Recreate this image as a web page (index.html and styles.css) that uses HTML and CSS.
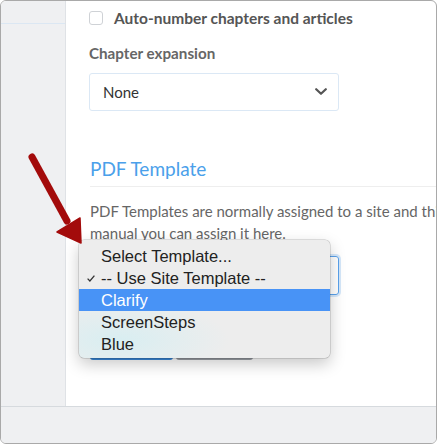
FILE: index.html
```html
<!DOCTYPE html>
<html>
<head>
<meta charset="utf-8">
<link rel="stylesheet" href="styles.css">
</head>
<body>
<div class="window">
  <div class="top">
    <aside class="sidebar"><div class="sidebar-line"></div></aside>
    <main class="main">
      <label class="check-row"><span class="checkbox"></span><span>Auto-number chapters and articles</span></label>
      <div class="field-label">Chapter expansion</div>
      <div class="select">
        <span>None</span>
        <svg class="chevron" width="12" height="8" viewBox="0 0 12 8"><polyline points="1.2,1.2 6,5.8 10.8,1.2" fill="none" stroke="#555" stroke-width="2.2" stroke-linecap="round" stroke-linejoin="round"/></svg>
      </div>
      <h2 class="section-title">PDF Template</h2>
      <p class="desc"><span class="line">PDF Templates are normally assigned to a site and this is the default template.</span><span class="line">manual you can assign it here.</span></p>
      <div class="select select-focus"></div>
      <div class="buttons">
        <span class="btn btn-primary"></span>
        <span class="btn btn-secondary"></span>
      </div>
    </main>
  </div>
  <footer class="footer"></footer>

  <div class="menu">
    <div class="menu-item">Select Template...</div>
    <div class="menu-item"><svg class="tick" width="8" height="7" viewBox="0 0 8 7"><polyline points="0.6,3.6 2.9,6 7.4,0.6" fill="none" stroke="#333" stroke-width="1.3"/></svg>-- Use Site Template --</div>
    <div class="menu-item active">Clarify</div>
    <div class="menu-item">ScreenSteps</div>
    <div class="menu-item">Blue</div>
  </div>

  <svg class="arrow" width="437" height="444" viewBox="0 0 437 444">
    <line x1="31" y1="156" x2="66" y2="220" stroke="#a30b0b" stroke-width="7" stroke-linecap="round"/>
    <polygon points="56,231 79,217 80,242" fill="#a30b0b" stroke="#a30b0b" stroke-width="1.5" stroke-linejoin="round"/>
  </svg>
</div>
</body>
</html>
```

FILE: styles.css
```css
html, body {
  margin: 0;
  padding: 0;
  background: #fff;
}

.window {
  position: relative;
  width: 437px;
  height: 444px;
  box-sizing: border-box;
  border: 1px solid #a9a9a9;
  border-radius: 6px;
  overflow: hidden;
  display: flex;
  flex-direction: column;
  background: #fff;
  font-family: Lato, "Open Sans", sans-serif;
}

.top {
  flex: 1;
  display: flex;
  min-height: 0;
}

.sidebar {
  width: 64px;
  flex: none;
  background: #eff0f2;
  border-right: 1px solid #dfe2e6;
}

.sidebar-line {
  height: 22px;
  border-bottom: 1px solid #dbe7f3;
}

.main {
  flex: 1;
  min-width: 0;
  overflow: hidden;
  padding-left: 23px;
}

.check-row {
  display: flex;
  align-items: center;
  gap: 11px;
  margin-top: 9px;
  height: 16px;
  font-size: 15.5px;
  font-weight: 700;
  color: #555;
  white-space: nowrap;
}

.checkbox {
  width: 12px;
  height: 12px;
  border: 1px solid #cfd2d6;
  border-radius: 3px;
  background: #fff;
}

.field-label {
  margin-top: 17px;
  font-size: 15.2px;
  font-weight: 700;
  color: #666;
  line-height: 20px;
}

.select {
  width: 250px;
  height: 38px;
  box-sizing: border-box;
  margin-top: 10px;
  border: 1px solid #dbe8f5;
  border-radius: 3px;
  display: flex;
  align-items: center;
  justify-content: space-between;
  padding: 0 11px 0 13px;
  font-size: 15px;
  color: #333;
}

.section-title {
  margin: 46px 0 0 1px;
  font-size: 19px;
  font-weight: 400;
  color: #4aa0ea;
  line-height: 24px;
  padding-bottom: 5px;
  border-bottom: 1px solid #eeeeee;
}

.desc {
  margin: 13px 0 0 1px;
  font-size: 15px;
  line-height: 22px;
  color: #666;
}

.desc .line {
  display: block;
  white-space: nowrap;
}

.select-focus {
  margin-top: 12px;
  height: 39px;
  border: 1px solid #5aa2ec;
  box-shadow: 0 0 0 2px rgba(90, 162, 236, 0.25);
}

.buttons {
  display: flex;
  gap: 3px;
  margin: 31px 0 0 1px;
}

.btn {
  height: 34px;
  border-radius: 3px;
}

.btn-primary {
  width: 83px;
  background: #3a88d8;
}

.btn-secondary {
  width: 77px;
  background: #9a9ea4;
}

.footer {
  height: 36px;
  flex: none;
  border-top: 1px solid #d6dade;
  background: #eff0f2;
}

.menu {
  position: absolute;
  left: 78px;
  top: 239px;
  width: 251px;
  height: 118px;
  box-sizing: border-box;
  padding-top: 5px;
  border-radius: 5px;
  background: radial-gradient(ellipse 110px 40px at 40px 100px, rgba(214, 238, 242, 0.9), rgba(236, 236, 236, 0) 100%), #ededed;
  box-shadow: 0 0 0 0.5px rgba(0, 0, 0, 0.22), 0 6px 16px rgba(0, 0, 0, 0.22);
  font-family: "Liberation Sans", Arial, sans-serif;
  font-size: 16.5px;
  color: #222;
}

.menu-item {
  position: relative;
  height: 22px;
  line-height: 22px;
  padding-left: 22px;
  white-space: nowrap;
}

.menu-item.active {
  background: #4893f6;
  color: #fff;
}

.tick {
  position: absolute;
  left: 8px;
  top: 8px;
}

.arrow {
  position: absolute;
  left: 0;
  top: 0;
  pointer-events: none;
}
```
